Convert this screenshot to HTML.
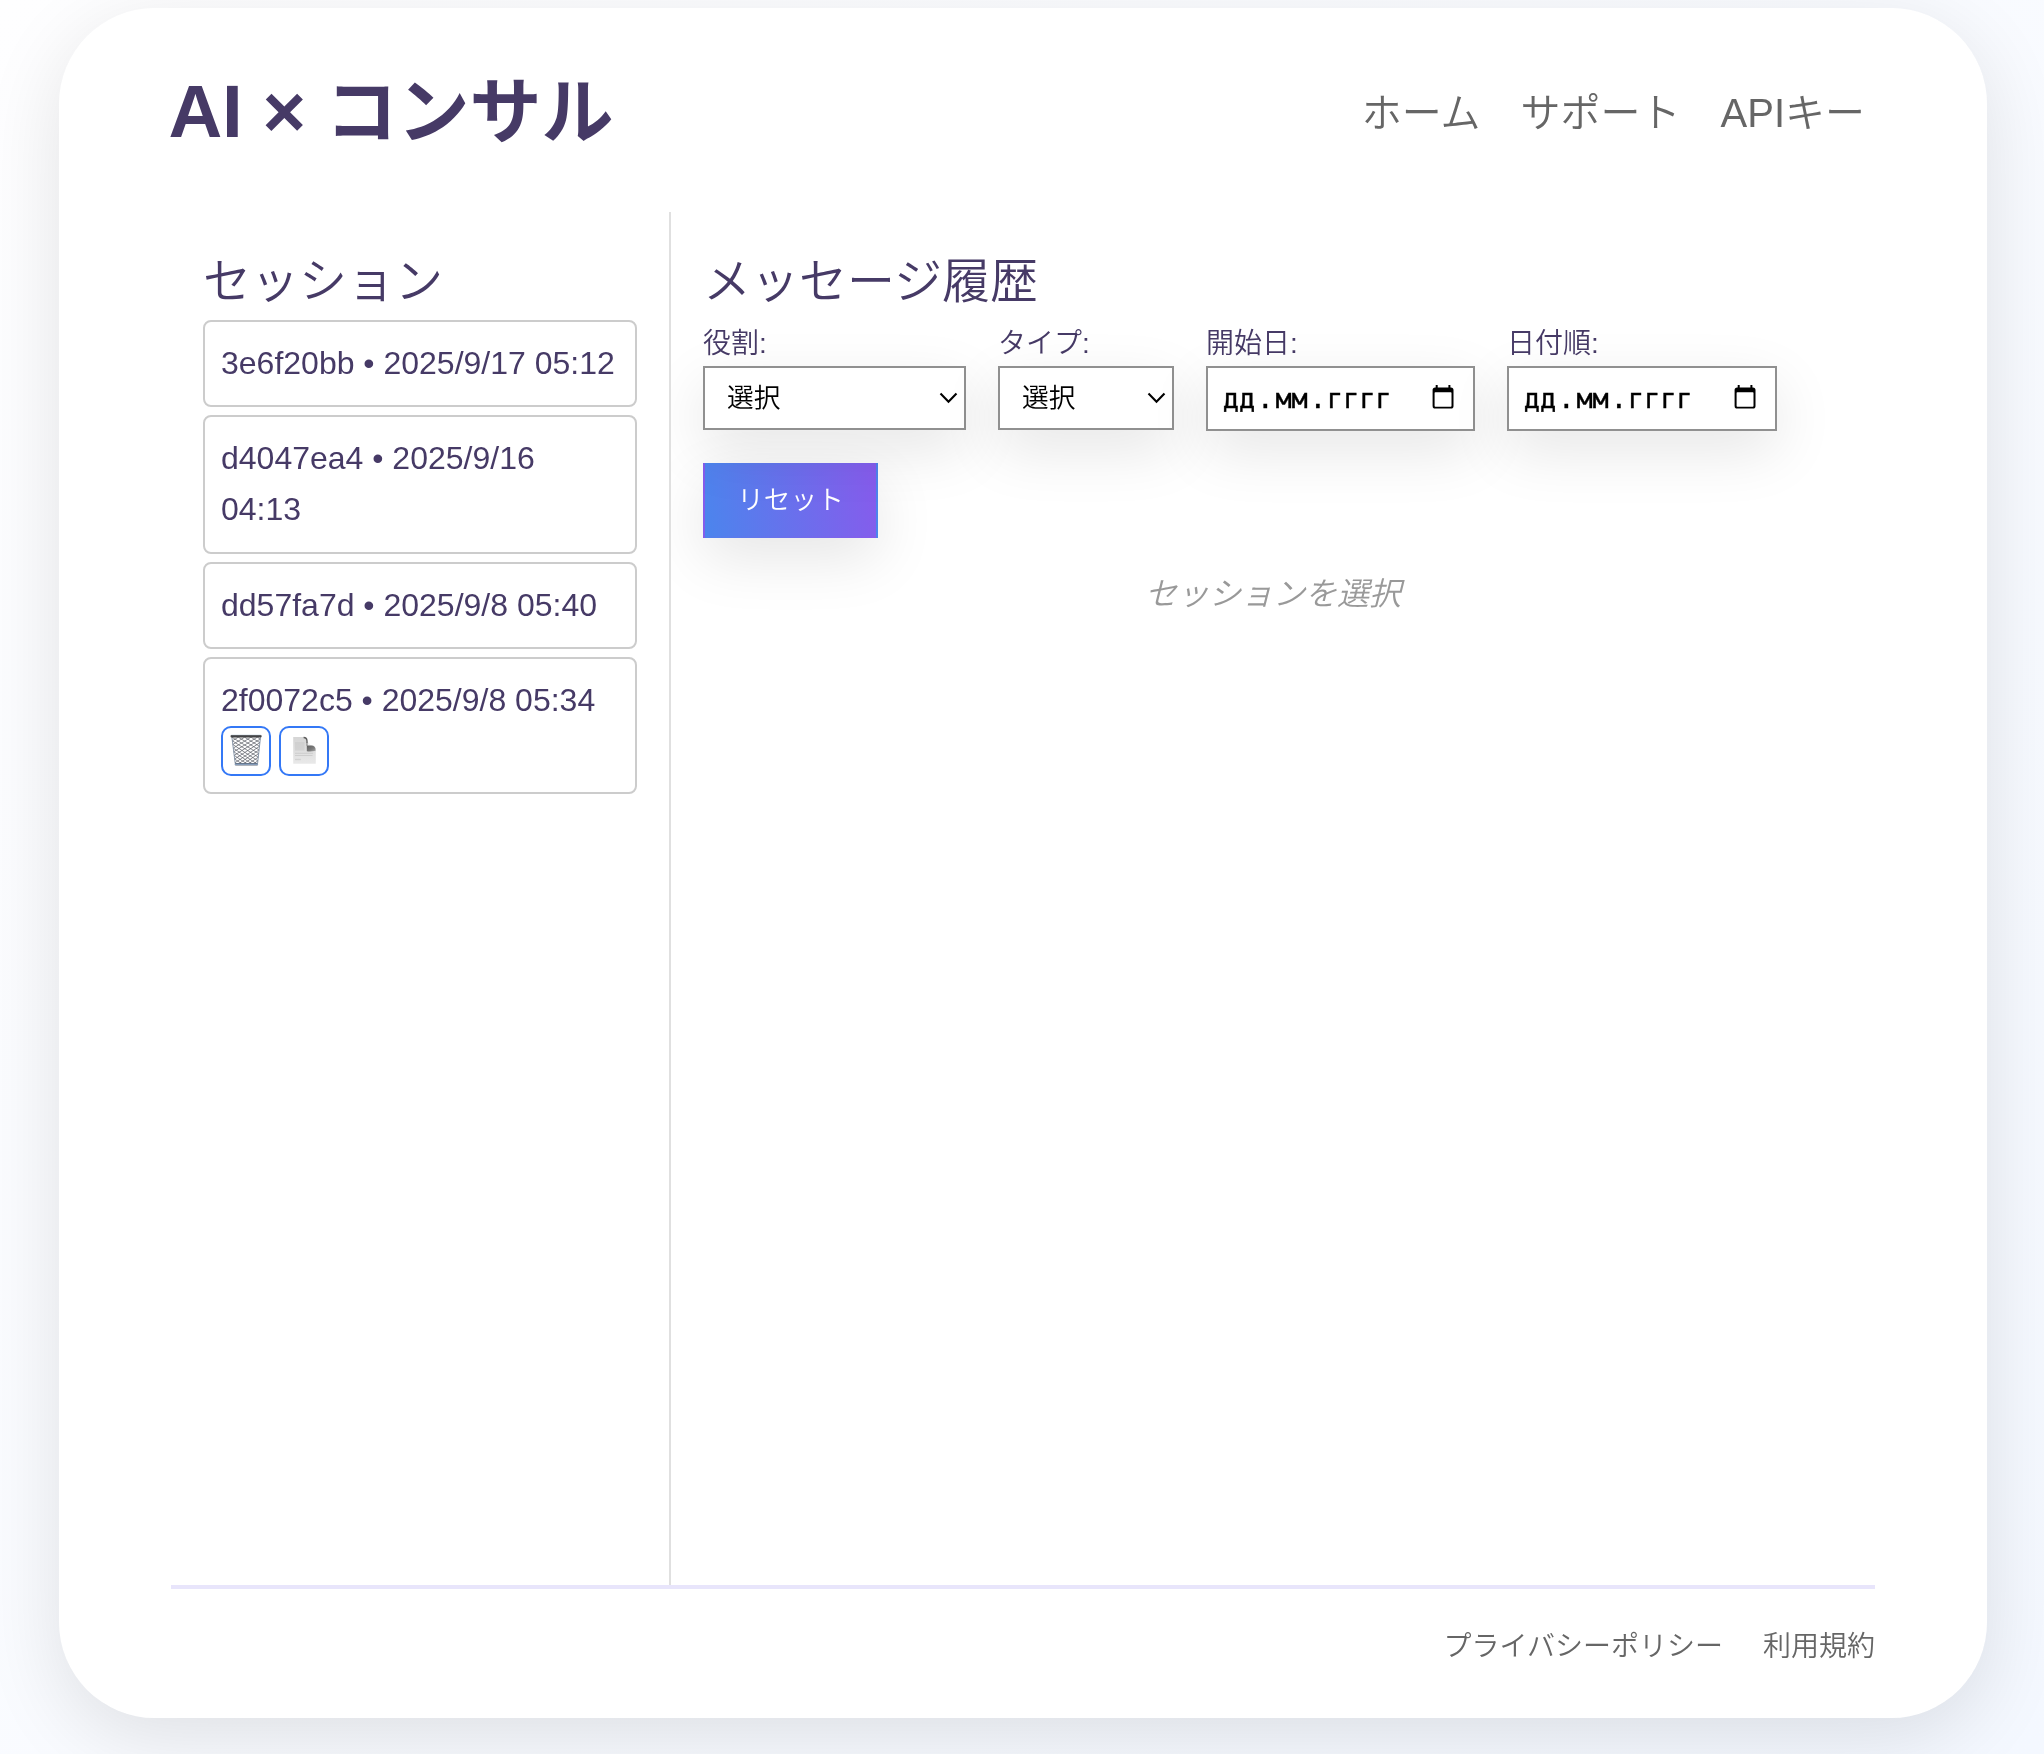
<!DOCTYPE html>
<html lang="ja">
<head>
<meta charset="utf-8">
<title>AI × コンサル</title>
<style>
*{box-sizing:border-box;margin:0;padding:0}
html,body{width:2044px;height:1754px;overflow:hidden}
body{position:relative;font-family:"Liberation Sans","Noto Sans CJK JP",sans-serif;font-weight:350;color:#463a66;
  background:linear-gradient(135deg,#fefeff 0%,#f4f8ff 100%);}
.card{position:absolute;left:59px;top:8px;width:1928px;height:1710px;border-radius:96px;background:#fff;
  box-shadow:0 20px 80px rgba(0,0,0,.11);}
h1{position:absolute;left:168.5px;top:60px;font-size:72px;line-height:104px;font-weight:700;color:#463a66;white-space:nowrap}
nav{position:absolute;right:179px;top:82px;font-size:40px;line-height:62px;color:#666;white-space:nowrap;display:flex;gap:40px}
aside{position:absolute;left:171px;top:212px;width:500px;height:1373px;border-right:2px solid #e0e0e0;padding:32px}
h2{font-size:48px;line-height:76px;font-weight:350;color:#463a66;white-space:nowrap}
.item{border:2px solid #ccc;border-radius:8px;padding:16px;font-size:32px;line-height:51.2px;margin-bottom:8px;color:#463a66;width:434px}
section{position:absolute;left:671px;top:212px;width:1204px;height:1373px;padding:32px;overflow:hidden}
footer{position:absolute;left:171px;top:1585px;width:1704px;border-top:4px solid #e8e5fb;padding-top:35.5px;
  font-size:28px;line-height:44.8px;color:#666;display:flex;justify-content:flex-end;gap:40px}

.filters{display:flex;gap:32px;align-items:flex-start}
.fg label{display:block;font-size:28px;line-height:44.8px;color:#463a66;white-space:nowrap;height:46px;padding-top:1.5px}
.ctl{position:relative;background:#fff;border:2px solid #909090;box-shadow:0 20px 60px rgba(0,0,0,.10);color:#000}
.sel{height:64px;font-size:26.67px;line-height:60px;padding-left:22px;font-family:"Liberation Sans","Noto Sans CJK JP",sans-serif}
.sel svg{position:absolute;right:5.6px;top:24px}
.date{height:65px;font-family:"DejaVu Sans Mono","Liberation Mono",monospace;font-size:26.9px;line-height:61px;padding-left:12.8px;white-space:nowrap}
.date svg{position:absolute;right:19.1px;top:16.9px}
.btn{margin-top:32px;width:175px;height:75px;border:2px solid transparent;background:linear-gradient(80deg,#4b85ed 0%,#875bec 100%);color:#fff;font-size:26.67px;line-height:71px;text-align:center;
  box-shadow:0 20px 60px rgba(0,0,0,.10)}
.empty{margin-top:31px;text-align:center;font-style:italic;color:#999;font-size:32px;line-height:51.2px}
.acts{display:flex;gap:8px;height:50px}
.ib{width:50px;height:50px;border:2px solid #3478f6;border-radius:10px;background:#fff;position:relative}
.ib svg{position:absolute}
.lat{font-size:74.5px;letter-spacing:-.4px}
.date .f{padding:0 2px}
.date{-webkit-text-stroke:.4px #000}
#root{position:absolute;left:0;top:0;width:2044px;height:1754px;will-change:transform}
</style>
</head>
<body>
<div id="root">
<div class="card"></div>
<h1><span class="lat">AI ×</span> コンサル</h1>
<nav><span>ホーム</span><span>サポート</span><span>APIキー</span></nav>
<aside>
  <h2>セッション</h2>
  <div class="item">3e6f20bb • 2025/9/17 05:12</div>
  <div class="item">d4047ea4 • 2025/9/16 04:13</div>
  <div class="item">dd57fa7d • 2025/9/8 05:40</div>
  <div class="item">2f0072c5 • 2025/9/8 05:34<div class="acts"><div class="ib" id="trash"><svg width="50" height="50" viewBox="0 0 50 50" style="left:-2px;top:-2px"><defs><filter id="tbl" x="-10%" y="-10%" width="120%" height="120%"><feGaussianBlur stdDeviation=".32"/></filter><linearGradient id="trim" x1="0" y1="0" x2="0" y2="1"><stop offset="0" stop-color="#b4c6d8"/><stop offset=".35" stop-color="#4a4a4c"/><stop offset="1" stop-color="#3c3c3e"/></linearGradient><linearGradient id="tbase" x1="0" y1="0" x2="0" y2="1"><stop offset="0" stop-color="#50555e"/><stop offset=".45" stop-color="#7f9cc0"/><stop offset="1" stop-color="#9a9a9c"/></linearGradient></defs><g filter="url(#tbl)"><path d="M14.11 36.67L15.20 37.40M13.65 33.03L20.17 37.40M13.19 29.39L25.15 37.40M12.73 25.76L30.13 37.40M12.27 22.12L35.11 37.40M11.82 18.48L36.88 34.85M11.36 14.84L37.28 31.21M10.90 11.20L37.69 27.57M17.26 11.20L38.09 23.94M23.61 11.20L38.49 20.30M29.97 11.20L38.90 16.66M36.32 11.20L39.30 13.02M17.26 11.20L11.36 14.84M23.61 11.20L11.82 18.48M29.97 11.20L12.28 22.12M36.32 11.20L12.73 25.76M39.30 13.02L13.19 29.39M38.90 16.66L13.65 33.03M38.49 20.30L14.11 36.67M38.09 23.94L18.18 37.40M37.69 27.58L23.16 37.40M37.28 31.21L28.14 37.40M36.88 34.85L33.12 37.40" stroke="#4b4f58" stroke-width=".72" fill="none" opacity=".9"/><path d="M10.9 11.2L14.2 37.4M39.5 11.2L36.6 37.4" stroke="#7f8ea3" stroke-width=".9" fill="none"/><rect x="9.6" y="8.7" width="31" height="2.7" rx="1.2" fill="url(#trim)"/><rect x="13.7" y="36.9" width="23.4" height="2.9" rx="1.4" fill="url(#tbase)"/></g></svg></div><div class="ib" id="doc"><svg width="50" height="50" viewBox="0 0 50 50" style="left:-2px;top:-2px"><defs><filter id="dbl" x="-10%" y="-10%" width="120%" height="120%"><feGaussianBlur stdDeviation=".45"/></filter><filter id="dbl2" x="-20%" y="-20%" width="140%" height="140%"><feGaussianBlur stdDeviation=".7"/></filter><linearGradient id="dpg" x1="0" y1="0" x2="0" y2="1"><stop offset="0" stop-color="#d6d6d6"/><stop offset=".5" stop-color="#dedede"/><stop offset="1" stop-color="#e9e9e9"/></linearGradient><linearGradient id="dcl" x1="0" y1="0" x2="1" y2="1"><stop offset="0" stop-color="#5e5e5e"/><stop offset=".6" stop-color="#7c7c7c"/><stop offset="1" stop-color="#a8a8a8"/></linearGradient></defs><g filter="url(#dbl)"><path d="M14.2 11.1H24.6Q28.1 11.1 28.1 14.8V19.6H32.4Q36.8 19.8 36.8 24.2V37.8H14.2Z" fill="url(#dpg)"/><path d="M28.3 15.2L32 19.4H28.3Z" fill="#efefef"/><rect x="16" y="16" width="9.5" height="8.6" fill="#c9c9c9" opacity=".55"/><rect x="16" y="26.8" width="18" height="1" fill="#c4c4c4" opacity=".7"/><rect x="16" y="29" width="17.5" height="1" fill="#c6c6c6" opacity=".7"/><rect x="16" y="32.8" width="5.8" height="1.4" fill="#cdcdcd" opacity=".8"/></g><g filter="url(#dbl2)"><path d="M27.8 19.4H32.3Q36.5 19.6 36.6 23.9L36.5 24.7Q32 25.9 27.8 25.2Z" fill="url(#dcl)"/><path d="M24.6 11.5Q27.9 11.6 28 15V17" stroke="#5c5c5c" stroke-width="1.3" fill="none"/><path d="M28 16.5V19.8" stroke="#777" stroke-width="1" fill="none"/></g></svg></div></div></div>
</aside>
<section>
  <h2>メッセージ履歴</h2>
  <div class="filters">
    <div class="fg"><label>役割:</label><div class="ctl sel" style="width:263px">選択<svg width="19" height="12" viewBox="0 0 19 12"><path d="M1.5 1.5 L9.5 9.8 L17.5 1.5" fill="none" stroke="#000" stroke-width="2.1"/></svg></div></div>
    <div class="fg"><label>タイプ:</label><div class="ctl sel" style="width:176px">選択<svg width="19" height="12" viewBox="0 0 19 12"><path d="M1.5 1.5 L9.5 9.8 L17.5 1.5" fill="none" stroke="#000" stroke-width="2.1"/></svg></div></div>
    <div class="fg"><label>開始日:</label><div class="ctl date" style="width:269px"><span class="f">дд</span>.<span class="f">мм</span>.<span class="f" style="padding-left:.8px">гггг</span><svg width="22" height="24" viewBox="0 0 22 24"><path d="M4.7 0.4v3M17.4 0.4v3" stroke="#000" stroke-width="2" stroke-linecap="round" fill="none"/><rect x="0.6" y="2.5" width="20.9" height="21" rx="2.6" fill="#000"/><rect x="2.6" y="7.3" width="16.9" height="14.4" rx="0.7" fill="#fff"/></svg></div></div>
    <div class="fg"><label>日付順:</label><div class="ctl date" style="width:270px"><span class="f">дд</span>.<span class="f">мм</span>.<span class="f" style="padding-left:.8px">гггг</span><svg width="22" height="24" viewBox="0 0 22 24"><path d="M4.7 0.4v3M17.4 0.4v3" stroke="#000" stroke-width="2" stroke-linecap="round" fill="none"/><rect x="0.6" y="2.5" width="20.9" height="21" rx="2.6" fill="#000"/><rect x="2.6" y="7.3" width="16.9" height="14.4" rx="0.7" fill="#fff"/></svg></div></div>
  </div>
  <div class="btn">リセット</div>
  <div class="empty">セッションを選択</div>
</section>
<footer><span>プライバシーポリシー</span><span>利用規約</span></footer>
</div>
<script>(function(){var w=window.innerWidth||0;if(w>100&&Math.abs(w-2044)>2){document.documentElement.style.overflow="visible";document.body.style.zoom=(w/2044);}})();</script>
</body>
</html>
